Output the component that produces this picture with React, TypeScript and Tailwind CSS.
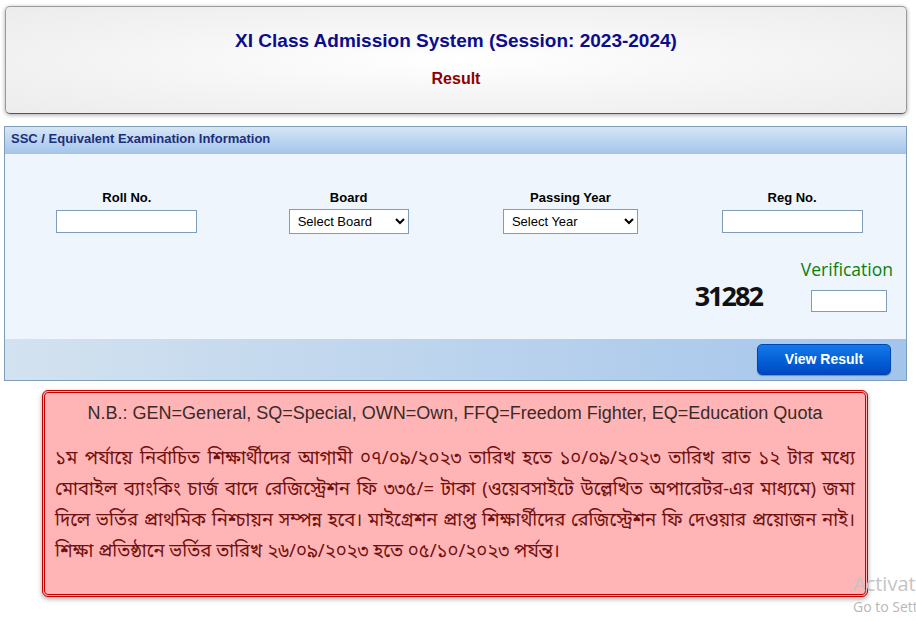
import { useState } from "react";

const ArialFont = { fontFamily: '"Liberation Sans", Arial, sans-serif' };

const Field = ({ label, children }: { label: string; children: React.ReactNode }) => (
  <div className="flex flex-col items-center">
    <label className="text-[13px] font-bold text-black mb-[4px] leading-[16px]">{label}</label>
    {children}
  </div>
);

const App = () => {
  const [roll, setRoll] = useState("");
  const [reg, setReg] = useState("");
  const [code, setCode] = useState("");

  return (
    <div className="relative w-[916px] h-[621px] bg-white overflow-hidden" style={ArialFont}>
      {/* page header */}
      <div className="mx-[5px] mt-[6px] w-[902px] h-[108px] rounded-[5px] border border-[#9a9a9a] border-b-[#555] shadow-[0_1px_4px_rgba(0,0,0,0.35)] bg-[radial-gradient(ellipse_at_center,#ffffff_0%,#f3f3f3_60%,#ececec_100%)] flex flex-col items-center">
        <h1 className="mt-[22px] text-[19px] leading-[24px] font-bold text-[#0c0c8c]">
          XI Class Admission System (Session: 2023-2024)
        </h1>
        <p className="mt-[16px] text-[16px] leading-[20px] font-bold text-[#8b0000]">Result</p>
      </div>

      {/* exam info panel */}
      <div className="mx-[4px] mt-[12px] w-[903px] border border-[#7f9db9]">
        <div className="h-[27px] bg-gradient-to-b from-[#d6e6f5] to-[#a3c4ea] px-[6px] pt-[4px]">
          <span className="block text-[13px] leading-[16px] font-bold text-[#1c2f7c]">
            SSC / Equivalent Examination Information
          </span>
        </div>
        <div className="h-[185px] bg-[#eef5fc] pt-[36px] pl-[11px] pr-[3px]">
          <div className="grid grid-cols-4">
            <Field label="Roll No.">
              <input
                value={roll}
                onChange={(e) => setRoll(e.target.value)}
                className="w-[141px] h-[23px] bg-white border border-[#7f9db9] outline-none px-1 text-[13px]"
              />
            </Field>
            <Field label="Board">
              <select className="-mt-[1px] w-[120px] h-[25px] bg-white border border-[#7f9db9] text-[13px] text-black px-[4px]">
                <option>Select Board</option>
              </select>
            </Field>
            <Field label="Passing Year">
              <select className="-mt-[1px] w-[135px] h-[25px] bg-white border border-[#7f9db9] text-[13px] text-black px-[4px]">
                <option>Select Year</option>
              </select>
            </Field>
            <Field label="Reg No.">
              <input
                value={reg}
                onChange={(e) => setReg(e.target.value)}
                className="w-[141px] h-[23px] bg-white border border-[#7f9db9] outline-none px-1 text-[13px]"
              />
            </Field>
          </div>

          <div className="flex justify-end items-end mt-[24px] pr-[10px]">
            <span
              className="text-[27px] font-bold tracking-[-2px] text-[#111] leading-[30px] mr-[39px] mb-[1px]"
              style={{ fontFamily: '"Open Sans", sans-serif' }}
            >
              31282
            </span>
            <div className="flex flex-col items-end" style={{ fontFamily: '"Open Sans", sans-serif' }}>
              <span className="text-[17.5px] leading-[22px] text-[#0a7f0a]">Verification</span>
              <input
                value={code}
                onChange={(e) => setCode(e.target.value)}
                className="mt-[10px] mr-[6px] w-[76px] h-[22px] bg-white border border-[#7f9db9] outline-none px-1 text-[13px]"
              />
            </div>
          </div>
        </div>
        <div className="h-[41px] bg-gradient-to-r from-[#d3e2ef] to-[#a4c5eb] flex items-center justify-end pr-[15px]">
          <button className="w-[134px] h-[31px] rounded-[5px] border border-[#0046b0] bg-gradient-to-b from-[#1579ea] to-[#0048c4] text-white text-[14px] font-bold shadow-[0_1px_1px_rgba(0,0,0,0.3)]">
            View Result
          </button>
        </div>
      </div>

      {/* note */}
      <div className="ml-[42px] mt-[9px] w-[826px] h-[207px] rounded-[6px] border-[3px] border-double border-[#c40000] bg-[#ffb5b5] shadow-[0_2px_5px_rgba(0,0,0,0.35)] px-[10px]">
        <p className="mt-[9px] text-center text-[18px] leading-[22px] text-[#3a2a2a]">
          N.B.: GEN=General, SQ=Special, OWN=Own, FFQ=Freedom Fighter, EQ=Education Quota
        </p>
        <p
          className="mt-[20px] text-[18.5px] leading-[31px] text-justify text-[#701010]"
          style={{ fontFamily: '"Noto Sans Bengali", Vrinda, "Noto Sans", sans-serif' }}
        >
          ১ম পর্যায়ে নির্বাচিত শিক্ষার্থীদের আগামী ০৭/০৯/২০২৩ তারিখ হতে ১০/০৯/২০২৩ তারিখ রাত ১২ টার মধ্যে
          মোবাইল ব্যাংকিং চার্জ বাদে রেজিস্ট্রেশন ফি ৩৩৫/= টাকা (ওয়েবসাইটে উল্লেখিত অপারেটর-এর মাধ্যমে) জমা
          দিলে ভর্তির প্রাথমিক নিশ্চায়ন সম্পন্ন হবে। মাইগ্রেশন প্রাপ্ত শিক্ষার্থীদের রেজিস্ট্রেশন ফি দেওয়ার প্রয়োজন নাই।
          শিক্ষা প্রতিষ্ঠানে ভর্তির তারিখ ২৬/০৯/২০২৩ হতে ০৫/১০/২০২৩ পর্যন্ত।
        </p>
      </div>

      {/* windows watermark */}
      <div
        className="absolute left-[853px] top-[574px] whitespace-nowrap text-[#c4c4c4] leading-none pointer-events-none"
        style={{ fontFamily: '"Open Sans", sans-serif' }}
      >
        <div className="text-[20px]">Activate Windows</div>
        <div className="text-[14px] mt-[6px] text-[#b8b8b8]">Go to Settings to activate Windows.</div>
      </div>
    </div>
  );
};

export default App;
